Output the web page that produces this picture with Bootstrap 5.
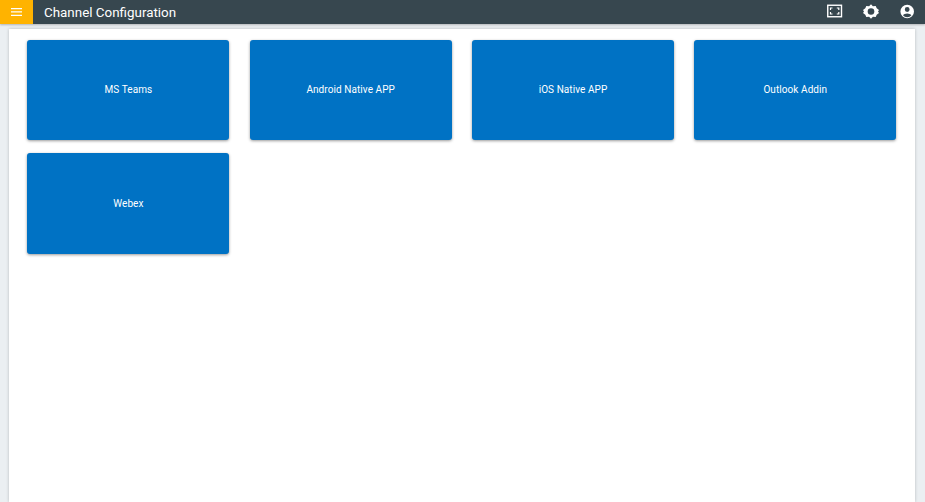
<!doctype html>
<html lang="en">
<head>
<meta charset="utf-8">
<title>Channel Configuration</title>
<link href="https://cdn.jsdelivr.net/npm/bootstrap@5.3.0/dist/css/bootstrap.min.css" rel="stylesheet">
<style>
html,body{height:100%}
body{background:#ebeff2;font-family:Roboto,"Liberation Sans",sans-serif;overflow:hidden}
.shell{height:502px}
.topbar{height:24px;background:#37474f;box-shadow:0 1px 2px rgba(0,0,0,.25)}
.menu-btn{width:33px;height:24px;background:#ffb300;border:0;padding:0}
.page-name{font-size:13.4px;line-height:25px;margin-left:11px;color:#fff}
.tool{width:16px;height:16px;display:block}
.tools{gap:20px;padding-right:10px}
.sheet{margin:5px 10px 0 9px;background:#fff;box-shadow:0 0 3px rgba(0,0,0,.22);padding:11px 18px 11px 18.4px;display:grid;grid-template-columns:repeat(4,202px);column-gap:20.3px;row-gap:13px;grid-auto-rows:100.4px;align-content:start}
.tile{background:#0072c4;color:#fff;font-size:10px;font-weight:400;letter-spacing:.07px;border-radius:3px;box-shadow:0 1px 3px rgba(0,0,0,.4);padding-bottom:1px}
</style>
</head>
<body>
<div class="shell d-flex flex-column">
  <header class="topbar d-flex align-items-center flex-shrink-0">
    <button class="menu-btn d-flex align-items-center justify-content-center" aria-label="Menu">
      <svg width="11" height="8" viewBox="0 0 11 8"><path fill="#fff" d="M0 0h11v1.300H0zM0 3.300h11v1.300H0zM0 6.700h11V8H0z"/></svg>
    </button>
    <div class="page-name flex-grow-1">Channel Configuration</div>
    <div class="tools d-flex align-items-center">
      <svg class="tool" viewBox="0 0 16 16"><rect x=".75" y="1.25" width="13.75" height="11.5" fill="none" stroke="#fff" stroke-width="1.4"/><path fill="none" stroke="#fff" stroke-width="1.2" d="M3.500 6V4h2M9.800 4h2v2M11.800 8v2h-2M5.500 10h-2V8"/></svg>
      <svg class="tool" viewBox="0 0 16 16"><g transform="translate(0 .3) scale(1 .9)"><path fill="#fff" d="M8 0l1.900 2.200 2.800-.4 1 2.700L16 6.200 15 8l1 1.800-2.300 1.700-1 2.700-2.800-.4L8 16l-1.900-2.200-2.800.4-1-2.700L0 9.800 1 8 0 6.200l2.300-1.700 1-2.700 2.800.4z"/></g><circle cx="8" cy="7.500" r="3.300" fill="#37474f"/></svg>
      <svg class="tool" viewBox="0 0 16 16"><path fill="#fff" fill-rule="evenodd" d="M8.200.7a6.800 6.800 0 1 1 0 13.600A6.800 6.800 0 0 1 8.200.7zM8.200 3.100a2.400 2.400 0 1 0 0 4.800 2.400 2.400 0 0 0 0-4.800zM4 11.300c1 1.200 2.500 1.900 4.200 1.900s3.200-.7 4.200-1.900c-.7-1.200-2.500-1.900-4.200-1.900S4.700 10.100 4 11.300z"/></svg>
    </div>
  </header>
  <main class="sheet flex-grow-1">
    <div class="tile d-flex align-items-center justify-content-center">MS Teams</div>
    <div class="tile d-flex align-items-center justify-content-center">Android Native APP</div>
    <div class="tile d-flex align-items-center justify-content-center">iOS Native APP</div>
    <div class="tile d-flex align-items-center justify-content-center">Outlook Addin</div>
    <div class="tile d-flex align-items-center justify-content-center">Webex</div>
  </main>
</div>
<script src="https://cdn.jsdelivr.net/npm/bootstrap@5.3.0/dist/js/bootstrap.bundle.min.js"></script>
</body>
</html>
